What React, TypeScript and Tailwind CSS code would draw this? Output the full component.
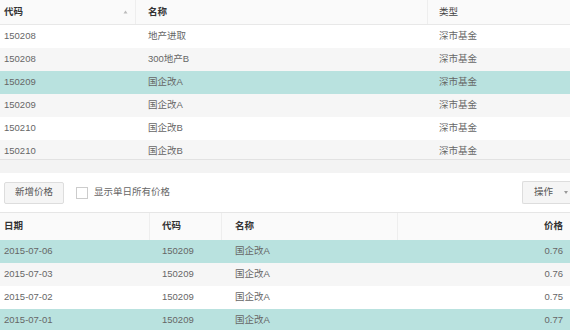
import React from "react";

const font = { fontFamily: '"Liberation Sans","Noto Sans CJK SC",sans-serif' };

const top = [
  ["150208", "地产进取", "深市基金", "bg-white"],
  ["150208", "300地产B", "深市基金", "bg-[#f6f6f6]"],
  ["150209", "国企改A", "深市基金", "bg-[#b9e2df]"],
  ["150209", "国企改A", "深市基金", "bg-[#f6f6f6]"],
  ["150210", "国企改B", "深市基金", "bg-white"],
  ["150210", "国企改B", "深市基金", "bg-[#f6f6f6]"],
];

const bottom = [
  ["2015-07-06", "150209", "国企改A", "0.76", "bg-[#b9e2df]"],
  ["2015-07-03", "150209", "国企改A", "0.76", "bg-[#f6f6f6]"],
  ["2015-07-02", "150209", "国企改A", "0.75", "bg-white"],
  ["2015-07-01", "150209", "国企改A", "0.77", "bg-[#b9e2df]"],
];

export default function App() {
  return (
    <div style={font} className="w-[570px] h-[330px] overflow-hidden bg-white text-[9.5px] text-[#666]">
      {/* top table */}
      <div className="flex h-[25px] items-center bg-[#fafafa] border-b border-[#e8e8e8] font-bold text-[#333]">
        <div className="w-[136px] h-full flex items-center justify-between pl-[4px] pr-[7px] border-r border-[#eeeeee]">
          <span>代码</span>
          <svg width="5" height="4" viewBox="0 0 5 4"><path d="M2.5 0.5 L4.5 3.5 L0.5 3.5 Z" fill="#bbb" /></svg>
        </div>
        <div className="w-[292px] h-full flex items-center pl-[12px] border-r border-[#eeeeee]">名称</div>
        <div className="flex-1 h-full flex items-center pl-[11px] font-normal text-[#444]">类型</div>
      </div>
      <div className="h-[134px] overflow-hidden">
        {top.map((r, i) => (
          <div key={i} className={`flex h-[23px] shrink-0 items-center ${r[3]}`}>
            <div className="w-[136px] pl-[4px]">{r[0]}</div>
            <div className="w-[292px] pl-[12px]">{r[1]}</div>
            <div className="flex-1 pl-[11px]">{r[2]}</div>
          </div>
        ))}
      </div>
      <div className="h-[14px] bg-[#f3f3f3] border-t border-[#e2e2e2]" />

      {/* toolbar */}
      <div className="h-[40px] flex items-center justify-between border-b border-[#e6e6e6]">
        <div className="flex items-center">
          <button className="ml-[4px] w-[60px] h-[22px] bg-[#f5f5f5] border border-[#dddddd] rounded-[2px] text-[#555]">新增价格</button>
          <span className="ml-[12px] w-[12px] h-[12px] bg-white border border-[#cccccc]" />
          <span className="ml-[6px] text-[#666]">显示单日所有价格</span>
        </div>
        <button className="w-[48px] h-[23px] bg-[#f5f5f5] border border-r-0 border-[#dddddd] rounded-l-[2px] flex items-center pl-[11px] text-[#555]">
          <span>操作</span>
          <svg className="ml-[11px]" width="4" height="3" viewBox="0 0 4 3"><path d="M0 0 L4 0 L2 3 Z" fill="#999" /></svg>
        </button>
      </div>

      {/* bottom table */}
      <div className="flex h-[27px] items-center bg-[#fafafa] font-bold text-[#333]">
        <div className="w-[150px] h-full flex items-center pl-[4px] border-r border-[#eeeeee]">日期</div>
        <div className="w-[72px] h-full flex items-center pl-[12px] border-r border-[#eeeeee]">代码</div>
        <div className="w-[176px] h-full flex items-center pl-[13px] border-r border-[#eeeeee]">名称</div>
        <div className="flex-1 h-full flex items-center justify-end pr-[7px]">价格</div>
      </div>
      {bottom.map((r, i) => (
        <div key={i} className={`flex h-[23px] items-center ${r[4]}`}>
          <div className="w-[150px] pl-[4px]">{r[0]}</div>
          <div className="w-[72px] pl-[12px]">{r[1]}</div>
          <div className="w-[176px] pl-[13px]">{r[2]}</div>
          <div className="flex-1 text-right pr-[7px]">{r[3]}</div>
        </div>
      ))}
    </div>
  );
}
